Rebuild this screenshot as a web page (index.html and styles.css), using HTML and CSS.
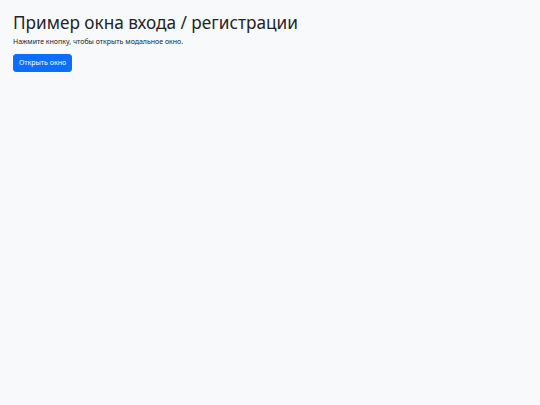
FILE: index.html
```html
<!DOCTYPE html>
<html lang="ru">
<head>
    <meta charset="UTF-8">
    <meta name="viewport" content="width=device-width, initial-scale=1.0">
    <title>Вход / регистрация</title>
    <link rel="stylesheet" href="styles.css">
</head>
<body>
    <div class="container">
        <h1 class="title">Пример окна входа / регистрации</h1>
        <p class="lead">Нажмите кнопку, чтобы открыть модальное окно.</p>
        <button class="btn btn-primary" type="button">Открыть окно</button>
    </div>
</body>
</html>
```

FILE: styles.css
```css
html {
    background: #f8f9fa;
}

body {
    margin: 0;
    font-family: "Noto Sans", "Open Sans", sans-serif;
    font-size: 7px;
    line-height: 1.5;
    color: #212529;
}

.container {
    padding: 13px 13px;
}

.title {
    margin: 0 0 3px;
    font-size: 17.2px;
    font-weight: 400;
    line-height: 1.2;
}

.lead {
    margin: 0 0 7px;
    font-size: 7px;
    line-height: 1.5;
}

.btn {
    display: inline-block;
    vertical-align: top;
    border: 1px solid transparent;
    border-radius: 3px;
    padding: 2.5px 5px;
    font-family: inherit;
    font-size: 7px;
    line-height: 1.5;
    cursor: pointer;
}

.btn-primary {
    color: #fff;
    background: #0d6efd;
    border-color: #0d6efd;
}
```
